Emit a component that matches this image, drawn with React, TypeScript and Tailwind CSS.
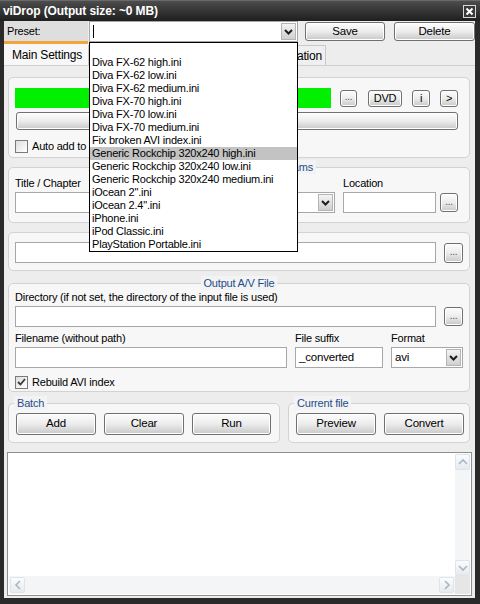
import type { ReactNode } from "react";
import clsx from "clsx";

const presets = [
  "Diva FX-62 high.ini",
  "Diva FX-62 low.ini",
  "Diva FX-62 medium.ini",
  "Diva FX-70 high.ini",
  "Diva FX-70 low.ini",
  "Diva FX-70 medium.ini",
  "Fix broken AVI index.ini",
  "Generic Rockchip 320x240 high.ini",
  "Generic Rockchip 320x240 low.ini",
  "Generic Rockchip 320x240 medium.ini",
  'iOcean 2".ini',
  'iOcean 2.4".ini',
  "iPhone.ini",
  "iPod Classic.ini",
  "PlayStation Portable.ini",
];

function Btn({ className, children }: { className?: string; children?: ReactNode }) {
  return (
    <div
      className={clsx(
        "flex shrink-0 items-center justify-center rounded-[3px] border border-[#707070] bg-linear-to-b from-[#fdfdfd] via-[#ececec] to-[#c8c8c8] text-black shadow-[inset_0_0_0_1px_#ffffff]",
        className
      )}
    >
      {children}
    </div>
  );
}

function Dots({ className }: { className?: string }) {
  return (
    <Btn className={clsx("rounded-[2px] text-[10px] leading-none", className)}>
      <span className="-mt-[2px] text-[#555]">...</span>
    </Btn>
  );
}

function Field({ className, children }: { className?: string; children?: ReactNode }) {
  return (
    <div className={clsx("flex h-[21px] shrink-0 items-center border border-[#a7a7a7] bg-white px-[3px]", className)}>
      {children}
    </div>
  );
}

function Chevron() {
  return (
    <svg width="9" height="6" viewBox="0 0 9 6">
      <polyline points="1,1 4.5,4.5 8,1" fill="none" stroke="#1e1e1e" strokeWidth="2" />
    </svg>
  );
}

function Combo({ className, children }: { className?: string; children?: ReactNode }) {
  return (
    <div className={clsx("flex h-[21px] shrink-0 items-center border border-[#a7a7a7] bg-white pl-[3px] pr-[1px]", className)}>
      <div className="flex-1">{children}</div>
      <div className="flex h-[17px] w-[15px] items-center justify-center border border-[#b5b5b5] bg-linear-to-b from-[#f4f4f4] to-[#cfcfcf]">
        <Chevron />
      </div>
    </div>
  );
}

function Check({ checked }: { checked?: boolean }) {
  return (
    <div className="flex h-[13px] w-[13px] shrink-0 items-center justify-center border border-[#7a7a7a] bg-linear-to-br from-[#dedede] to-[#ffffff]">
      {checked && (
        <svg width="9" height="8" viewBox="0 0 9 8">
          <polyline points="1,4 3.5,6.5 8,1" fill="none" stroke="#3a3a3a" strokeWidth="1.8" />
        </svg>
      )}
    </div>
  );
}

function Group({
  title,
  align = "center",
  className,
  children,
}: {
  title?: string;
  align?: "center" | "left";
  className?: string;
  children?: ReactNode;
}) {
  return (
    <div className={clsx("relative shrink-0 rounded-[5px] border border-[#d2d2d2] bg-[#f7f7f7]", className)}>
      {title && (
        <div
          className={clsx(
            "absolute -top-[8px] flex",
            align === "center" ? "inset-x-0 justify-center" : "left-[5px]"
          )}
        >
          <span className="bg-[#f3f3f3] px-[3px] leading-[14px] text-[#1f4d8a]">{title}</span>
        </div>
      )}
      {children}
    </div>
  );
}

function ScrollArrow({ dir }: { dir: "up" | "down" | "left" | "right" }) {
  const pts = {
    up: "1,6 5,2 9,6",
    down: "1,2 5,6 9,2",
    left: "6,1 2,5 6,9",
    right: "2,1 6,5 2,9",
  }[dir];
  const vertical = dir === "up" || dir === "down";
  return (
    <div className="flex h-[16px] w-[15px] shrink-0 items-center justify-center rounded-[2px] border border-[#dfe4ea] bg-linear-to-b from-[#fbfcfd] to-[#e6eaef]">
      <svg width={vertical ? 10 : 8} height={vertical ? 8 : 10} viewBox={vertical ? "0 0 10 8" : "0 0 8 10"}>
        <polyline points={pts} fill="none" stroke="#a9b6c6" strokeWidth="1.6" />
      </svg>
    </div>
  );
}

export default function App() {
  return (
    <div className="relative flex h-[604px] w-[480px] flex-col overflow-hidden bg-[#2a2a2a] font-['Liberation_Sans',Arial,sans-serif] text-[11px] tracking-[-0.2px] text-black">
      {/* title bar */}
      <div className="flex h-[21px] shrink-0 items-center justify-between border-t border-[#6a6a6a] bg-linear-to-b from-[#4d4d4d] to-[#1f1f1f] pl-[3px] pr-[4px]">
        <span className="text-[12px] font-bold tracking-[-0.1px] text-white">viDrop (Output size: ~0 MB)</span>
        <div className="flex h-[13px] w-[13px] items-center justify-center border border-[#d8d8d8] bg-[#3a3a3a]">
          <svg width="9" height="9" viewBox="0 0 9 9">
            <path d="M1.5 1.5 L7.5 7.5 M7.5 1.5 L1.5 7.5" stroke="#ffffff" strokeWidth="2" />
          </svg>
        </div>
      </div>

      <div className="mb-[6px] ml-[4px] mr-[5px] flex flex-1 flex-col bg-[#ededed]">
        {/* preset row */}
        <div className="flex h-[21px] shrink-0 items-center">
          <div className="flex h-full w-[84px] items-center bg-[#dedede] pl-[3px]">Preset:</div>
          <Combo className="ml-[1px] h-[20px] w-[209px]">
            <div className="h-[13px] w-px bg-black" />
          </Combo>
          <Btn className="ml-[7px] h-[19px] w-[80px] text-[11.5px]">Save</Btn>
          <Btn className="ml-[9px] h-[19px] w-[81px] text-[11.5px]">Delete</Btn>
        </div>

        {/* tabs */}
        <div className="flex h-[24px] shrink-0 items-end border-b border-[#cfcfcf]">
          <div className="flex h-[24px] w-[84px] items-center border-t-[3px] border-[#f2a33a] bg-[#f7f7f7] pl-[8px] text-[12px]">
            Main Settings
          </div>
          <div className="h-[20px] w-[110px] border border-b-0 border-[#c9c9c9] bg-[#efefef]" />
          <div className="flex h-[20px] w-[128px] items-center justify-end border border-b-0 border-[#c9c9c9] bg-[#efefef] pr-[3px] text-[12px]">
            Information
          </div>
        </div>

        {/* tab page */}
        <div className="flex shrink-0 flex-col pl-[4px] pr-[5px]">
          <Group className="mt-[11px] h-[81px]">
            <div className="flex items-center pl-[6px] pt-[10px]">
              <div className="h-[20px] w-[316px] bg-[#00f000]" />
              <Dots className="ml-[9px] h-[17px] w-[17px]" />
              <Btn className="ml-[11px] h-[17px] w-[34px] rounded-[2px]">DVD</Btn>
              <Btn className="ml-[10px] h-[17px] w-[18px] rounded-[2px]">i</Btn>
              <Btn className="ml-[10px] h-[17px] w-[18px] rounded-[2px]">&gt;</Btn>
            </div>
            <Btn className="ml-[7px] mt-[4px] h-[18px] w-[442px] rounded-[3px]" />
            <div className="mt-[8px] flex items-center gap-[4px] pl-[6px]">
              <Check />
              <span>Auto add to batch</span>
            </div>
          </Group>

          <Group title="Video / Audio / Subtitle Streams" className="mt-[9px] h-[56px]">
            <div className="flex pl-[6px] pt-[9px]">
              <div className="flex w-[145px] flex-col">
                <span className="h-[15px] leading-[13px]">Title / Chapter</span>
                <Field className="w-[145px]" />
              </div>
              <div className="ml-[8px] flex w-[167px] flex-col">
                <span className="h-[15px]" />
                <Combo className="w-[167px]" />
              </div>
              <div className="ml-[8px] flex flex-col">
                <span className="h-[15px] leading-[13px]">Location</span>
                <div className="flex items-center">
                  <Field className="w-[93px]" />
                  <Dots className="ml-[4px] h-[19px] w-[18px]" />
                </div>
              </div>
            </div>
          </Group>

          <Group className="mt-[9px] h-[39px]">
            <div className="flex items-center pl-[6px] pt-[9px]">
              <Field className="w-[421px]" />
              <Dots className="ml-[8px] h-[20px] w-[19px]" />
            </div>
          </Group>

          <Group title="Output A/V File" className="mt-[12px] h-[109px]">
            <div className="flex flex-col pl-[6px] pt-[7px]">
              <span className="h-[15px] leading-[13px]">Directory (if not set, the directory of the input file is used)</span>
              <div className="flex items-center">
                <Field className="w-[421px]" />
                <Dots className="ml-[8px] h-[19px] w-[19px]" />
              </div>
              <div className="mt-[5px] flex">
                <div className="flex w-[272px] flex-col">
                  <span className="h-[15px] leading-[13px]">Filename (without path)</span>
                  <Field className="w-[272px]" />
                </div>
                <div className="ml-[8px] flex w-[88px] flex-col">
                  <span className="h-[15px] leading-[13px]">File suffix</span>
                  <Field className="w-[88px] text-[11.5px]">_converted</Field>
                </div>
                <div className="ml-[8px] flex w-[72px] flex-col">
                  <span className="h-[15px] leading-[13px]">Format</span>
                  <Combo className="w-[72px] text-[11.5px]">avi</Combo>
                </div>
              </div>
              <div className="mt-[6px] flex items-center gap-[4px]">
                <Check checked />
                <span>Rebuild AVI index</span>
              </div>
            </div>
          </Group>

          <div className="mt-[11px] flex">
            <Group title="Batch" align="left" className="h-[40px] w-[272px]">
              <div className="flex gap-[8px] pl-[7px] pt-[9px]">
                <Btn className="h-[22px] w-[80px] text-[11.5px]">Add</Btn>
                <Btn className="h-[22px] w-[80px] text-[11.5px]">Clear</Btn>
                <Btn className="h-[22px] w-[79px] text-[11.5px]">Run</Btn>
              </div>
            </Group>
            <Group title="Current file" align="left" className="ml-[8px] h-[40px] flex-1">
              <div className="flex gap-[8px] pl-[7px] pt-[9px]">
                <Btn className="h-[22px] w-[80px] text-[11.5px]">Preview</Btn>
                <Btn className="h-[22px] w-[80px] text-[11.5px]">Convert</Btn>
              </div>
            </Group>
          </div>
        </div>

        {/* log */}
        <div className="mx-[3px] mt-[9px] flex h-[144px] flex-col border border-[#8f8f8f] bg-white p-px">
          <div className="flex flex-1">
            <div className="flex-1" />
            <div className="flex w-[15px] flex-col justify-between bg-[#f4f5f6]">
              <ScrollArrow dir="up" />
              <ScrollArrow dir="down" />
            </div>
          </div>
          <div className="flex h-[18px]">
            <div className="flex flex-1 items-center justify-between bg-[#f4f5f6] px-px">
              <ScrollArrow dir="left" />
              <ScrollArrow dir="right" />
            </div>
            <div className="w-[15px] bg-[#e6e6e6]" />
          </div>
        </div>
      </div>

      {/* open preset list */}
      <div className="absolute left-[89px] top-[42px] w-[209px] border border-black bg-white">
        <div className="h-[13px]" />
        {presets.map((p) => (
          <div
            key={p}
            className={clsx(
              "h-[13px] whitespace-nowrap pl-[2px] leading-[13px]",
              p === "Generic Rockchip 320x240 high.ini" && "bg-[#c3c3c3]"
            )}
          >
            {p}
          </div>
        ))}
      </div>
    </div>
  );
}
